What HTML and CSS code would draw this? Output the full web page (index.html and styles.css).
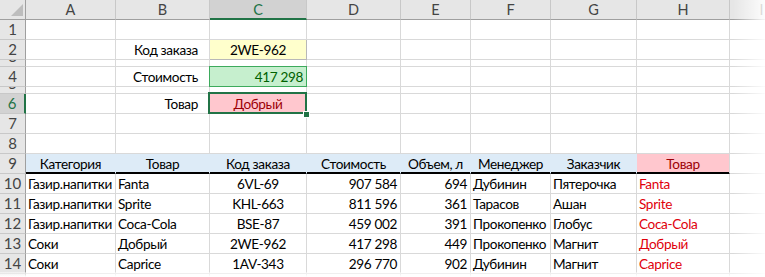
FILE: index.html
```html
<!DOCTYPE html>
<html lang="ru">
<head>
    <meta charset="UTF-8">
    <title>Поиск по коду заказа</title>
    <link rel="stylesheet" href="styles.css">
</head>
<body>

<div class="sheet">
    <div class="row head">
        <div class="corner">
            <svg width="13" height="13" viewBox="0 0 13 13"><polygon points="12,0 12,12 0,12" fill="#bdbdbd"/></svg>
        </div>
        <div>A</div><div>B</div><div class="sel">C</div><div>D</div><div>E</div><div>F</div><div>G</div><div>H</div><div>I</div>
    </div>

    <div class="row">
        <div class="num">1</div><div></div><div></div><div></div><div></div><div></div><div></div><div></div><div></div><div></div>
    </div>
    <div class="row">
        <div class="num">2</div><div></div>
        <div class="r label">Код заказа</div>
        <div class="c note">2WE-962</div>
        <div></div><div></div><div></div><div></div><div></div><div></div>
    </div>
    <div class="row short">
        <div class="num">3</div><div></div><div></div><div></div><div></div><div></div><div></div><div></div><div></div><div></div>
    </div>
    <div class="row">
        <div class="num">4</div><div></div>
        <div class="r label">Стоимость</div>
        <div class="r good">417 298</div>
        <div></div><div></div><div></div><div></div><div></div><div></div>
    </div>
    <div class="row short">
        <div class="num">5</div><div></div><div></div><div></div><div></div><div></div><div></div><div></div><div></div><div></div>
    </div>
    <div class="row">
        <div class="num sel">6</div><div></div>
        <div class="r label">Товар</div>
        <div class="c bad active">Добрый</div>
        <div></div><div></div><div></div><div></div><div></div><div></div>
    </div>
    <div class="row">
        <div class="num">7</div><div></div><div></div><div></div><div></div><div></div><div></div><div></div><div></div><div></div>
    </div>
    <div class="row">
        <div class="num">8</div><div></div><div></div><div></div><div></div><div></div><div></div><div></div><div></div><div></div>
    </div>

    <!-- шапка таблицы -->
    <div class="row titles">
        <div class="num">9</div>
        <div class="c">Категория</div>
        <div class="c">Товар</div>
        <div class="c">Код заказа</div>
        <div class="c">Стоимость</div>
        <div class="c">Объем, л</div>
        <div class="c">Менеджер</div>
        <div class="c">Заказчик</div>
        <div class="c found">Товар</div>
        <div class="plain"></div>
    </div>

    <div class="row">
        <div class="num">10</div>
        <div>Газир.напитки</div><div>Fanta</div><div class="c">6VL-69</div><div class="r">907 584</div><div class="r">694</div>
        <div>Дубинин</div><div>Пятерочка</div><div class="red">Fanta</div><div></div>
    </div>
    <div class="row">
        <div class="num">11</div>
        <div>Газир.напитки</div><div>Sprite</div><div class="c">KHL-663</div><div class="r">811 596</div><div class="r">361</div>
        <div>Тарасов</div><div>Ашан</div><div class="red">Sprite</div><div></div>
    </div>
    <div class="row">
        <div class="num">12</div>
        <div>Газир.напитки</div><div>Coca-Cola</div><div class="c">BSE-87</div><div class="r">459 002</div><div class="r">391</div>
        <div>Прокопенко</div><div>Глобус</div><div class="red">Coca-Cola</div><div></div>
    </div>
    <div class="row">
        <div class="num">13</div>
        <div>Соки</div><div>Добрый</div><div class="c">2WE-962</div><div class="r">417 298</div><div class="r">449</div>
        <div>Прокопенко</div><div>Магнит</div><div class="red">Добрый</div><div></div>
    </div>
    <div class="row">
        <div class="num">14</div>
        <div>Соки</div><div>Caprice</div><div class="c">1AV-343</div><div class="r">296 770</div><div class="r">902</div>
        <div>Дубинин</div><div>Магнит</div><div class="red">Caprice</div><div></div>
    </div>
    <div class="row">
        <div class="num"></div><div></div><div></div><div></div><div></div><div></div><div></div><div></div><div></div><div></div>
    </div>

    <div class="fade-right"></div>
    <div class="fade-bottom"></div>
</div>

</body>
</html>
```

FILE: styles.css
```css
body {
    margin: 0;
    background: #fff;
    font-family: Lato, 'Liberation Sans', sans-serif;
    font-size: 13.6px;
    color: #000;
}
.sheet {
    position: relative;
    width: 765px;
    height: 277px;
    overflow: hidden;
}
.row {
    display: grid;
    grid-template-columns: 26px 90px 94px 97px 94px 70px 80px 86px 93px 64px;
    height: 20px;
}
.row.short {
    height: 7px;
}
.row > div {
    box-sizing: border-box;
    border-right: 1px solid #d9d9d9;
    border-bottom: 1px solid #d9d9d9;
    padding: 1px 2px 0;
    line-height: 18px;
    letter-spacing: -0.35px;
    white-space: nowrap;
    overflow: hidden;
}

/* заголовки строк и столбцов */
.head > div {
    background: #e6e6e6;
    border-right-color: #c8c8c8;
    border-bottom-color: #9f9f9f;
    color: #444;
    text-align: center;
    font-size: 14.5px;
    letter-spacing: 0;
}
.head > .sel {
    background: #d2d2d2;
    color: #217346;
    border-bottom: 2px solid #217346;
}
.head > .corner {
    position: relative;
    border-right-color: #9f9f9f;
}
.corner svg {
    position: absolute;
    right: 1px;
    bottom: 2px;
}
.row > .num {
    display: flex;
    justify-content: center;
    align-items: flex-end;
    padding: 0;
    background: #e6e6e6;
    border-right-color: #9f9f9f;
    border-bottom-color: #c8c8c8;
    color: #444;
    font-size: 15px;
    line-height: 19px;
    letter-spacing: 0;
}
.row > .num.sel {
    background: #d2d2d2;
    color: #217346;
    border-right: 2px solid #217346;
}

.r { text-align: right; }
.c { text-align: center; }
.row > .label { padding-right: 11px; }
.row > .r:not(.label) { padding-right: 3px; }

/* ячейки поиска */
.row > .note {
    background: #ffffcc;
    border-right-color: #b8b8b8;
    border-bottom-color: #b8b8b8;
}
.row > .good {
    position: relative;
    background: #c6efce;
    color: #006100;
    overflow: visible;
}
.good::after {
    content: '';
    position: absolute;
    inset: -1px -1px -1px -1px;
    border: 1px solid #3daa5c;
}
.row > .bad {
    background: #ffc7ce;
    color: #9c0006;
}
.row > .active {
    position: relative;
    overflow: visible;
}
.active::after {
    content: '';
    position: absolute;
    inset: -2px -1px -1px -2px;
    border: 2px solid #217346;
}
.active::before {
    content: '';
    position: absolute;
    right: -3px;
    bottom: -4px;
    width: 5px;
    height: 5px;
    background: #217346;
    z-index: 2;
    box-shadow: 0 0 0 1px #fff;
}

/* шапка таблицы */
.titles > div:not(.num):not(.plain) {
    background: #ddebf7;
    border-right-color: #ddebf7;
    border-bottom-color: #000;
    box-shadow: inset 0 -1px #000;
}
.titles > .found {
    background: #ffc7ce !important;
    border-right-color: #d9d9d9 !important;
    color: #9c0006;
}
.red {
    color: #e0000b;
}

/* затухание по краям */
.fade-right {
    position: absolute;
    top: 0;
    right: 0;
    width: 32px;
    height: 100%;
    background: linear-gradient(to right, rgba(255,255,255,0), rgba(255,255,255,0.9));
}
.fade-bottom {
    position: absolute;
    left: 0;
    bottom: 0;
    width: 100%;
    height: 5px;
    background: linear-gradient(to bottom, rgba(255,255,255,0.4), #fff);
}
```
